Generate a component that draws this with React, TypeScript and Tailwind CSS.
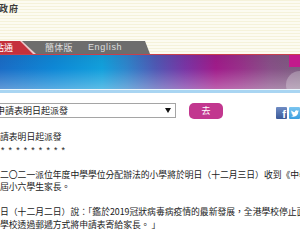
import React from "react";

export default function App() {
  return (
    <div className="w-[300px] h-[240px] overflow-hidden bg-white font-['Noto_Sans_CJK_TC','Noto_Sans_CJK_SC',sans-serif] text-[#222]">
      {/* header */}
      <div className="h-[55px] flex flex-col border-b border-[#c8404c] bg-[repeating-linear-gradient(to_bottom,#f5f2da_0px,#f5f2da_1px,#fcfbf1_1px,#fcfbf1_3px)]">
        <div className="h-[41px] pt-[3px] text-[9px] leading-[12px] tracking-[1px] text-[#3a3a3a] font-bold whitespace-nowrap">
          <span className="ml-[-1px]">政府</span>
        </div>
        <div className="relative h-[13px]">
          <div className="h-full w-[150px] bg-[#6d6d6d] [clip-path:polygon(0_0,145px_0,150px_100%,0_100%)] flex items-center text-[9px] leading-[13px] text-[#dedede] whitespace-nowrap">
            <span className="ml-[45px] tracking-[0.3px]">簡体版</span>
            <span className="ml-[15px] font-['Liberation_Sans',sans-serif] tracking-[0.7px]">English</span>
          </div>
          <div className="absolute left-0 top-0 h-full w-[36px] bg-[#e9c9cc] [clip-path:polygon(0_0,22px_0,36px_100%,0_100%)]" />
          <div className="absolute left-0 top-0 h-full w-[33px] bg-[#c5303c] [clip-path:polygon(0_0,20px_0,33px_100%,0_100%)] flex items-center text-[9px] leading-[13px] text-white whitespace-nowrap">
            <span className="ml-[-5px]">站通</span>
          </div>
        </div>
      </div>

      {/* banner */}
      <div className="relative h-[34px] overflow-hidden bg-[linear-gradient(90deg,#1a6cc6_0%,#0e88d6_18%,#12a0dc_34%,#2e86cc_42%,#5058b4_52%,#7a34a4_62%,#a01c8a_72%,#98308a_80%,#885088_90%,#7c5e80_100%)]">
        <div className="absolute inset-0 bg-[linear-gradient(to_bottom,rgba(0,0,0,0.05)_0%,transparent_40%,rgba(255,255,255,0.3)_100%)]" />
        <div className="absolute right-0 top-0 w-[11px] h-[12px] bg-[#c21a8c]" />
        <div className="absolute left-[286px] top-[16px] w-[28px] h-[28px] rounded-full bg-white/25" />
      </div>
      <div className="h-[1px] bg-[#eaf5fc]" />
      <div className="h-[3px] bg-[#a9d5f2]" />

      {/* select row */}
      <div className="mt-[10px] flex items-start h-[16px]">
        <div className="ml-[-6px] w-[185px] h-[15px] border border-[#a5a5a5] bg-white flex items-center justify-between pl-[1px] pr-[4px] text-[9px] leading-[13px] whitespace-nowrap">
          <span>申請表明日起派發</span>
          <svg width="6" height="5" viewBox="0 0 6 5">
            <polygon points="0,0 6,0 3,5" fill="#111" />
          </svg>
        </div>
        <div className="ml-[13px] w-[35px] h-[16px] rounded-[5px] bg-[#c2378f] text-white text-[9px] leading-[16px] flex items-center justify-center">
          去
        </div>
        <div className="ml-[53px] mt-[4px] w-[11px] h-[12px] rounded-[1px] bg-[linear-gradient(to_bottom,#6f8cc4,#3b5998)] flex items-end justify-end overflow-hidden">
          <span className="font-['Liberation_Sans',sans-serif] font-bold text-white text-[11px] leading-[10px] mr-[1px]">f</span>
        </div>
        <div className="ml-[2px] mt-[4px] w-[11px] h-[12px] shrink-0 rounded-[1px] bg-[linear-gradient(to_bottom,#7cc6f0,#3a9ee0)] flex items-center justify-center">
          <svg width="8" height="7" viewBox="0 0 24 20">
            <path
              d="M24 2.4a9.8 9.8 0 0 1-2.8.8 4.9 4.9 0 0 0 2.1-2.7 9.8 9.8 0 0 1-3.1 1.2A4.9 4.9 0 0 0 11.8 6 14 14 0 0 1 1.7.9a4.9 4.9 0 0 0 1.5 6.6A4.9 4.9 0 0 1 1 6.9a4.9 4.9 0 0 0 3.9 4.8 4.9 4.9 0 0 1-2.2.1 4.9 4.9 0 0 0 4.6 3.4A9.9 9.9 0 0 1 0 17.2 14 14 0 0 0 7.5 19.4c9 0 14-7.5 14-14v-.6A10 10 0 0 0 24 2.4z"
              fill="#fff"
            />
          </svg>
        </div>
      </div>

      {/* body text */}
      <div className="mt-[12px] text-[8.8px] leading-[12.5px] text-[#1a1a1a] whitespace-nowrap">
        <div>請表明日起派發</div>
        <div className="font-['Liberation_Sans',sans-serif] tracking-[0.85px] pl-[1px]">* * * * * * * * *</div>
        <div className="h-[12.5px]" />
        <div>二〇二一派位年度中學學位分配辦法的小學將於明日（十二月三日）收到《中學學位分配辦法》</div>
        <div>屆小六學生家長。</div>
        <div className="h-[12.5px]" />
        <div>日（十二月二日）說：「鑑於2019冠狀病毒病疫情的最新發展，全港學校停止面授課堂</div>
        <div>學校透過郵遞方式將申請表寄給家長。 」</div>
      </div>
    </div>
  );
}
